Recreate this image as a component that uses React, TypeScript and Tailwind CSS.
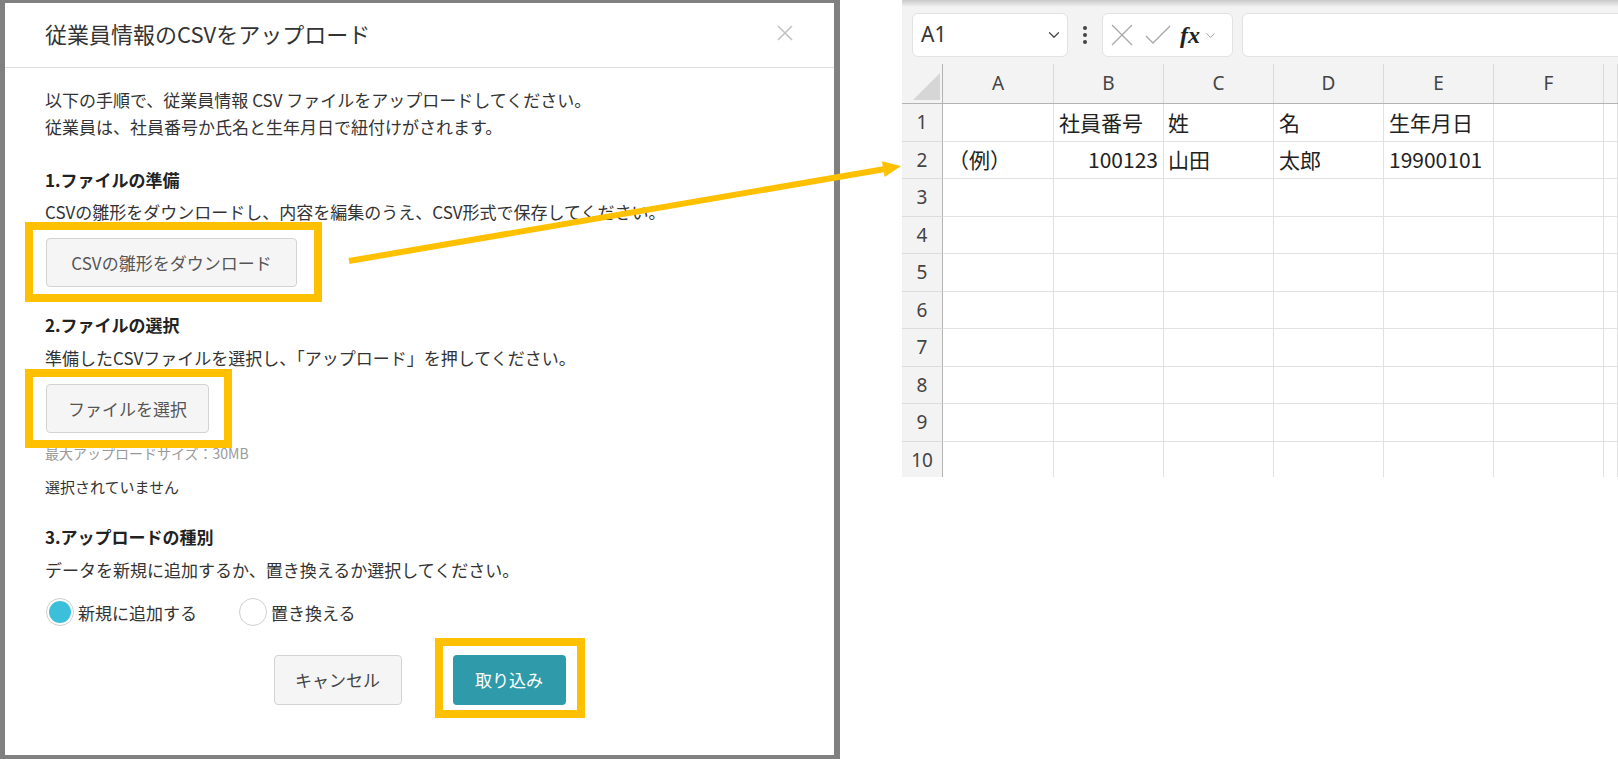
import { ChevronDown } from 'lucide-react'

// Excel side: column letters and the two sample rows
const COLS = ['A', 'B', 'C', 'D', 'E', 'F', '']
const ROWS: { a: string; b: string; c: string; d: string; e: string }[] = [
  { a: '', b: '社員番号', c: '姓', d: '名', e: '生年月日' },
  { a: '（例）', b: '100123', c: '山田', d: '太郎', e: '19900101' },
]

function Highlight({ className }: { className: string }) {
  return <span className={'pointer-events-none absolute border-[8px] border-[#ffc000] ' + className} />
}

function Radio({ checked, label }: { checked?: boolean; label: string }) {
  return (
    <label className="flex items-center gap-[4px]">
      <span className="flex h-[28px] w-[28px] items-center justify-center rounded-full border border-[#cfcfcf] bg-white">
        {checked && <span className="h-[22px] w-[22px] rounded-full bg-[#3cbfdb]" />}
      </span>
      <span>{label}</span>
    </label>
  )
}

function UploadModal() {
  return (
    <div className="h-full w-[840px] shrink-0 bg-[#808080] pl-[5px] pt-[3px]">
      <div className="flex h-[752px] w-[829px] flex-col bg-white">
        <div className="flex h-[65px] items-center justify-between border-b border-[#dddddd] pb-[4px] pl-[40px] pr-[41px]">
          <h1 className="text-[22px] leading-[30px] text-[#333]">従業員情報のCSVをアップロード</h1>
          <svg width="16" height="16" viewBox="0 0 16 16">
            <path d="M1 1L15 15M15 1L1 15" stroke="#c2c2c2" strokeWidth="1.6" />
          </svg>
        </div>

        <div className="pl-[40px] pt-[18px] text-[17px] leading-[27px] text-[#333]">
          <p>以下の手順で、従業員情報 CSV ファイルをアップロードしてください。</p>
          <p>従業員は、社員番号か氏名と生年月日で紐付けがされます。</p>

          <h2 className="mt-[26px] font-bold text-[#222]">1.ファイルの準備</h2>
          <p className="mt-[5px]">CSVの雛形をダウンロードし、内容を編集のうえ、CSV形式で保存してください。</p>
          <div className="relative ml-[1px] mt-[12.5px] w-fit">
            <button className="h-[49px] w-[251px] rounded-[4px] border border-[#d3d3d3] bg-[#f5f5f5] text-[17px] text-[#555]">
              CSVの雛形をダウンロード
            </button>
            <Highlight className="-bottom-[15px] -left-[21px] -right-[25px] -top-[16px]" />
          </div>

          <h2 className="mt-[24.5px] font-bold text-[#222]">2.ファイルの選択</h2>
          <p className="mt-[6px]">準備したCSVファイルを選択し、「アップロード」を押してください。</p>
          <div className="relative ml-[1px] mt-[12.5px] w-fit">
            <button className="h-[49px] w-[163px] rounded-[4px] border border-[#d3d3d3] bg-[#f5f5f5] text-[17px] text-[#555]">
              ファイルを選択
            </button>
            <Highlight className="-bottom-[15px] -left-[21px] -right-[23px] -top-[15px]" />
          </div>
          <p className="mt-[11px] text-[14px] leading-[18px] text-[#9a9a9a]">最大アップロードサイズ：30MB</p>
          <p className="mt-[13px] text-[15px] leading-[24px]">選択されていません</p>

          <h2 className="mt-[24.5px] font-bold text-[#222]">3.アップロードの種別</h2>
          <p className="mt-[6px]">データを新規に追加するか、置き換えるか選択してください。</p>
          <div className="ml-[1px] mt-[15px] flex items-center gap-[42px]">
            <Radio checked label="新規に追加する" />
            <Radio label="置き換える" />
          </div>
        </div>

        <div className="mt-[28.5px] flex justify-center gap-[51px] text-[17px]">
          <button className="h-[50px] w-[128px] rounded-[4px] border border-[#d3d3d3] bg-[#f5f5f5] text-[#444]">
            キャンセル
          </button>
          <div className="relative">
            <button className="h-[50px] w-[113px] rounded-[4px] bg-[#2f9aaa] text-white">取り込み</button>
            <Highlight className="-bottom-[13px] -left-[18px] -right-[19px] -top-[17px]" />
          </div>
        </div>
      </div>
    </div>
  )
}

function ExcelSheet() {
  const grid = 'grid grid-cols-[41px_111px_110px_110px_110px_110px_110px_14px]'
  return (
    <div className="ml-[62px] h-[477px] w-[716px] overflow-hidden font-['Noto_Sans_CJK_JP',sans-serif]">
      {/* formula bar */}
      <div className="flex h-[64px] items-start bg-[linear-gradient(to_bottom,#c9c9c9_0px,#f3f3f3_7px,#f3f3f3_100%)] pl-[10px] pt-[13px]">
        <div className="flex h-[44px] w-[156px] items-center justify-between rounded-[6px] border border-[#e2e2e2] bg-white pl-[8px] pr-[4px]">
          <span className="font-['Noto_Sans',sans-serif] text-[21px] text-[#333]">A1</span>
          <ChevronDown size={18} strokeWidth={1.6} className="text-[#444]" />
        </div>
        <div className="flex h-[44px] w-[34px] flex-col items-center justify-center gap-[3px]">
          <span className="h-[4px] w-[4px] rounded-full bg-[#444]" />
          <span className="h-[4px] w-[4px] rounded-full bg-[#444]" />
          <span className="h-[4px] w-[4px] rounded-full bg-[#444]" />
        </div>
        <div className="flex h-[44px] w-[131px] items-center rounded-[6px] border border-[#e2e2e2] bg-white pl-[8px]">
          <svg width="22" height="22" viewBox="0 0 22 22">
            <path d="M1 1L21 21M21 1L1 21" stroke="#a8a8a8" strokeWidth="1.3" />
          </svg>
          <svg className="ml-[12px]" width="26" height="20" viewBox="0 0 26 20">
            <path d="M1 11L8 18L25 1" fill="none" stroke="#a8a8a8" strokeWidth="1.3" />
          </svg>
          <span className="ml-[9px] font-['Liberation_Serif',serif] text-[24px] font-bold italic leading-none text-[#222]">
            fx
          </span>
          <ChevronDown size={15} strokeWidth={1.3} className="ml-[3px] text-[#888]" />
        </div>
        <div className="-mr-[12px] ml-[9px] h-[44px] flex-1 rounded-[6px] border border-[#e2e2e2] bg-white" />
      </div>

      {/* column headers */}
      <div className={grid + ' h-[40px] border-b border-[#b3b3b3] bg-[#f3f3f3]'}>
        <div className="relative border-r border-[#b3b3b3]">
          <svg className="absolute left-[11px] top-[9px]" width="27" height="27" viewBox="0 0 27 27">
            <path d="M27 0L27 27L0 27Z" fill="#d6d6d6" />
          </svg>
        </div>
        {COLS.map((c, k) => (
          <div
            key={k}
            className="flex items-center justify-center border-r border-[#dadada] font-['Noto_Sans',sans-serif] text-[19px] text-[#444]"
          >
            {c}
          </div>
        ))}
      </div>

      {/* rows */}
      {Array.from({ length: 10 }, (_, i) => {
        const r = ROWS[i]
        return (
          <div key={i} className={grid + ' h-[37.5px] text-[21px] text-[#222]'}>
            <div className="flex items-center justify-center border-b border-r border-[#dcdcdc] border-r-[#b3b3b3] bg-[#f3f3f3] font-['Noto_Sans',sans-serif] text-[19px] text-[#444]">
              {i + 1}
            </div>
            <div className="flex items-center border-b border-r border-[#e1e1e1] pl-[5px]">{r?.a}</div>
            <div
              className={
                'flex items-center border-b border-r border-[#e1e1e1] ' + (i === 1 ? 'justify-end pr-[5px]' : 'pl-[5px]')
              }
            >
              {r?.b}
            </div>
            <div className="flex items-center border-b border-r border-[#e1e1e1] pl-[4px]">{r?.c}</div>
            <div className="flex items-center border-b border-r border-[#e1e1e1] pl-[5px]">{r?.d}</div>
            <div className="flex items-center border-b border-r border-[#e1e1e1] pl-[5px]">{r?.e}</div>
            <div className="border-b border-r border-[#e1e1e1]" />
            <div className="border-b border-r border-[#e1e1e1]" />
          </div>
        )
      })}
    </div>
  )
}

export default function App() {
  return (
    <div className="relative flex h-[759px] w-[1618px] overflow-hidden bg-white font-['Noto_Sans_CJK_JP','Noto_Sans',sans-serif]">
      <UploadModal />
      <ExcelSheet />
      {/* annotation arrow */}
      <svg className="pointer-events-none absolute left-0 top-0" width="1618" height="759" viewBox="0 0 1618 759">
        <line x1="349" y1="261" x2="885" y2="169" stroke="#ffc000" strokeWidth="6" />
        <path d="M901 166L884.7 177L881.9 161.2Z" fill="#ffc000" />
      </svg>
    </div>
  )
}
